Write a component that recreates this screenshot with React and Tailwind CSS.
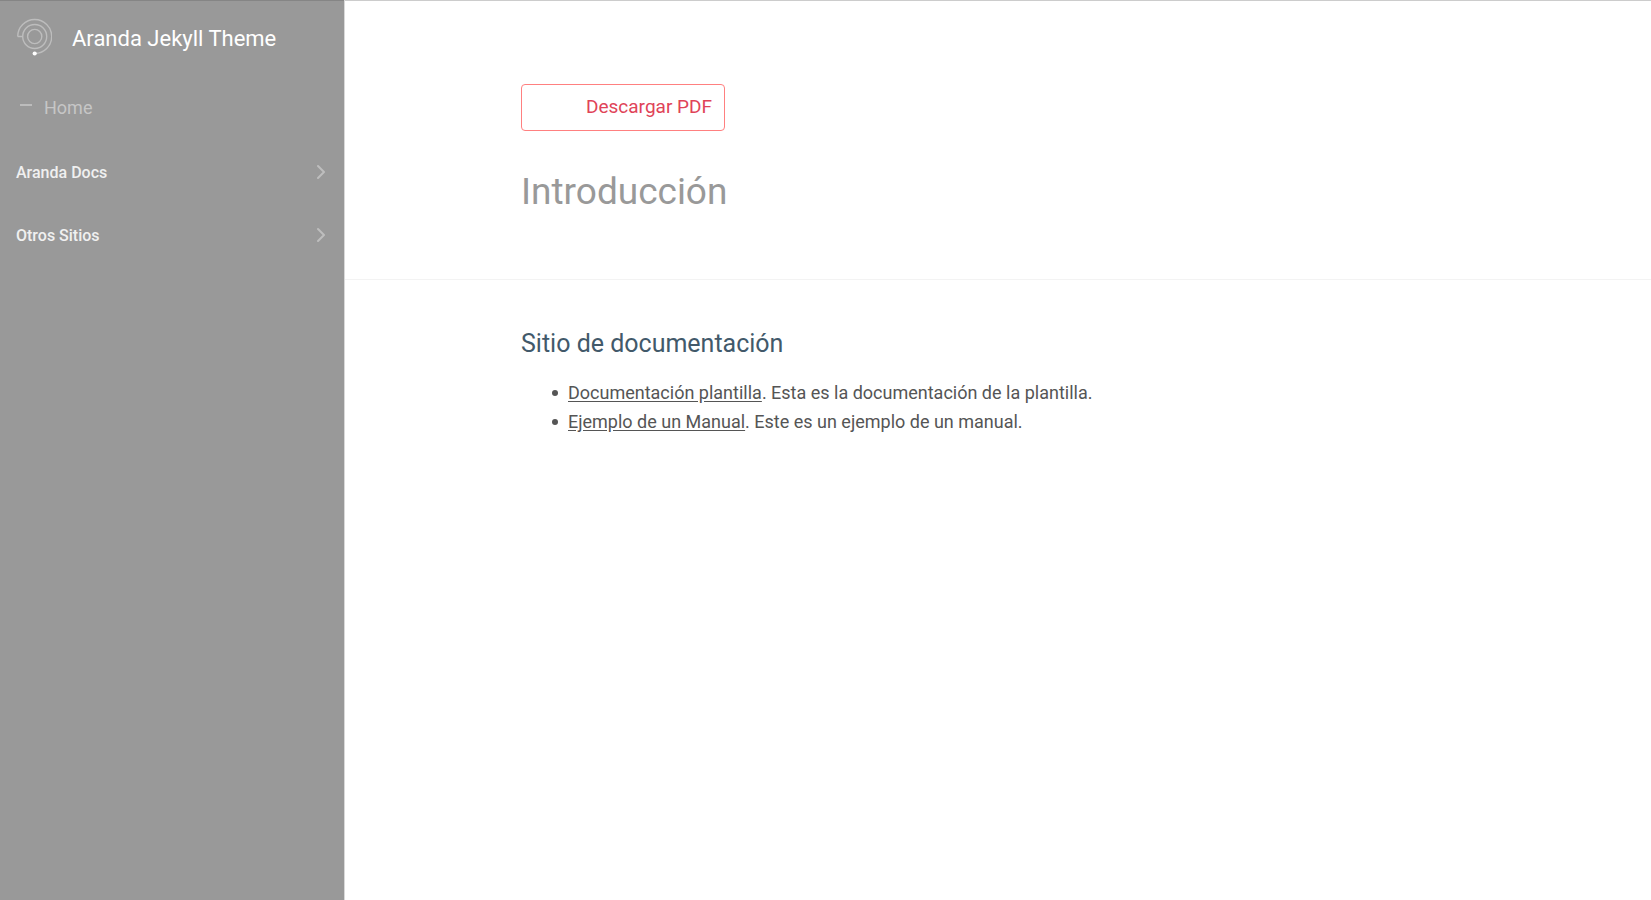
import { ChevronRight } from "lucide-react";

const sections = ["Aranda Docs", "Otros Sitios"];

const docs = [
  { name: "Documentación plantilla", text: ". Esta es la documentación de la plantilla." },
  { name: "Ejemplo de un Manual", text: ". Este es un ejemplo de un manual." },
];

function Logo() {
  return (
    <svg className="h-[42px] w-9 shrink-0" viewBox="-1 0 36 42" fill="none" stroke="#bdbdbd" strokeWidth="1.4" aria-hidden="true">
      <circle cx="17.7" cy="18.5" r="7.1" />
      <path d="M0.7 18.5H5.7A12 12 0 1 0 17.7 6.5A12 12 0 0 0 5.7 18.5" />
      <path d="M0.7 18.5A17 17 0 1 1 17.7 35.5" />
      <circle cx="17.7" cy="35.5" r="2.1" fill="#fff" stroke="none" />
    </svg>
  );
}

function Sidebar() {
  return (
    <aside className="w-[345px] shrink-0 border-r border-[#d9d9d9] bg-[#999999]">
      <div className="border-t border-[#858585] px-4 pt-[17px]">
        <a href="#inicio" className="flex items-center gap-5 text-[22px] leading-10 text-white">
          <Logo />
          Aranda Jekyll Theme
        </a>
      </div>
      <nav className="pt-[30px]">
        <a href="#home" className="flex items-center gap-3 pl-5 text-[18px] leading-9 text-[#c6c6c6]">
          <span className="mb-1.5 h-0.5 w-3 bg-[#bcbcbc]" />
          Home
        </a>
        <div className="flex flex-col gap-6 pt-[27px]">
          {sections.map((name) => (
            <button key={name} type="button" className="flex items-center justify-between pr-[11px] pl-4 text-[16px] leading-[39px] font-medium text-[#f0f0f0]">
              {name}
              <ChevronRight className="mb-0.5 size-6 text-[#bebebe]" strokeWidth={2} />
            </button>
          ))}
        </div>
      </nav>
    </aside>
  );
}

export default function App() {
  return (
    <div className="flex min-h-screen bg-white font-['Roboto','Liberation_Sans',sans-serif]">
      <Sidebar />
      <main className="min-w-0 flex-1 border-t border-[#cccccc]">
        <header className="border-b border-[#f3f3f3]">
          <div className="mx-auto w-full max-w-[954px] pt-[83px] pb-[58px]">
            <button type="button" className="block h-[47px] w-[204px] rounded border border-[#ff8080] pr-3 text-right text-[19px] text-[#e04358]">
              Descargar PDF
            </button>
            <h1 className="pt-8 text-[37px] leading-[58px] text-[#999999]">Introducción</h1>
          </div>
        </header>
        <div className="mx-auto w-full max-w-[954px] pt-12">
          <h2 className="text-[25px] leading-8 text-[#42596a]">Sitio de documentación</h2>
          <ul className="pt-[18px] pl-[31px] text-[18px] leading-[29px] text-[#555555]">
            {docs.map((doc) => (
              <li key={doc.name} className="flex items-center gap-[10px] before:size-1.5 before:shrink-0 before:rounded-full before:bg-[#555555]">
                <p>
                  <a href="#documento" className="underline underline-offset-2">{doc.name}</a>
                  {doc.text}
                </p>
              </li>
            ))}
          </ul>
        </div>
      </main>
    </div>
  );
}
